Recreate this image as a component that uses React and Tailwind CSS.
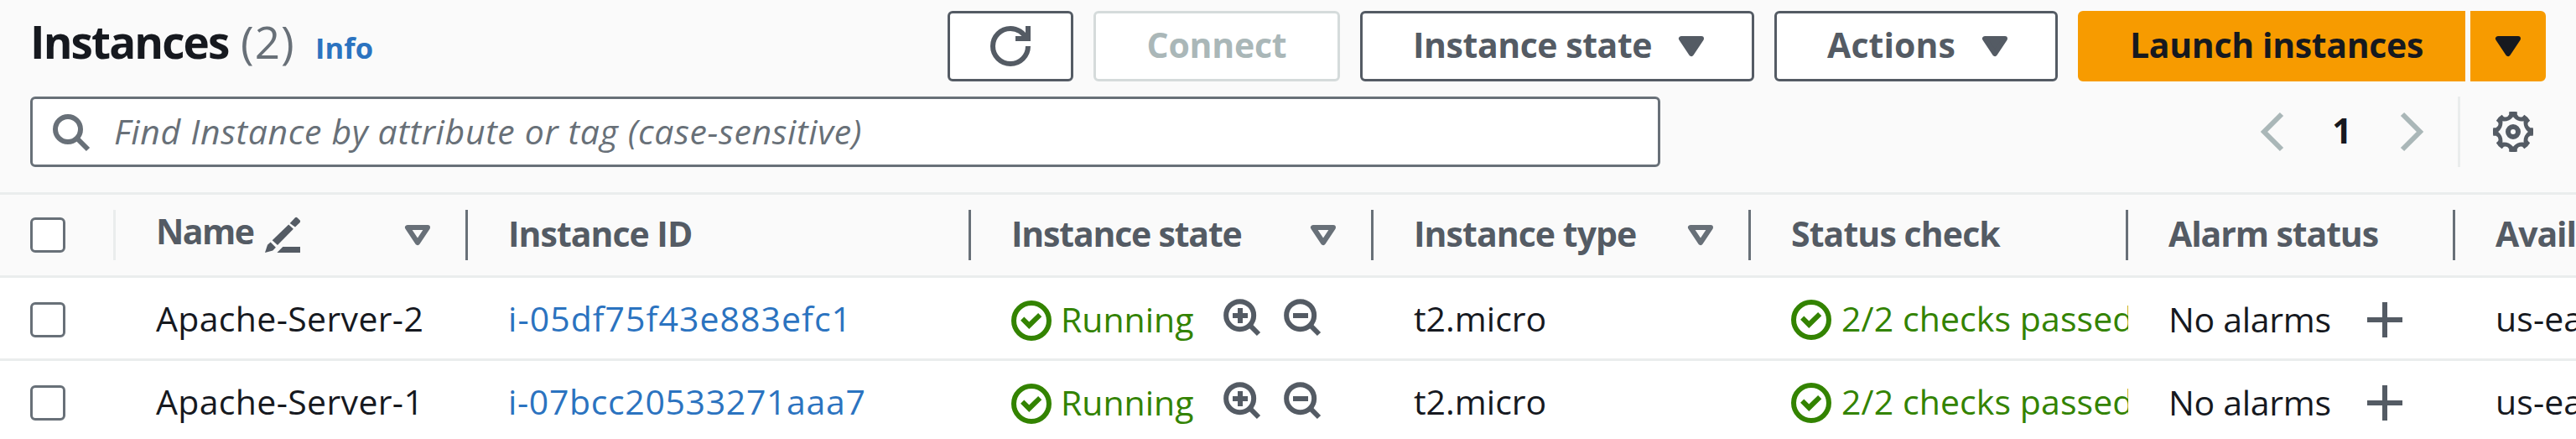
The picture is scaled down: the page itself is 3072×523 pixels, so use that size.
const COLUMNS =
  'grid grid-cols-[138px_420px_600px_480px_450px_450px_390px_480px] items-center';

function Icon({ children, className = '' }) {
  return (
    <svg
      viewBox="0 0 16 16"
      fill="none"
      stroke="currentColor"
      strokeWidth="2"
      className={`size-12 shrink-0 ${className}`}
    >
      {children}
    </svg>
  );
}

const Refresh = () => (
  <Icon className="text-[#545b64]">
    <path d="M15 8c0 3.87-3.13 7-7 7s-7-3.13-7-7 3.13-7 7-7c2.79 0 5.2 1.63 6.33 4" />
    <path d="M10 5h5V0" />
  </Icon>
);

const CaretFilled = () => (
  <Icon>
    <path d="M4 5h8l-4 6-4-6z" fill="currentColor" strokeLinejoin="round" />
  </Icon>
);

const Sort = () => (
  <Icon className="mr-[33px] ml-auto text-[#687078]">
    <path d="M4 5h8l-4 6-4-6z" strokeLinejoin="round" />
  </Icon>
);

const Search = () => (
  <Icon className="text-[#687078]">
    <circle cx="7" cy="7" r="5" />
    <path d="m15 15-4.5-4.5" />
  </Icon>
);

const Pencil = () => (
  <Icon className="text-[#545b64]">
    <g fill="currentColor" stroke="none">
      <path d="M13 1.1q.4-.4.8 0l1.1 1.1q.3.4 0 .8L13 4.8 10.9 3.3z" />
      <path d="M10.4 3.8l1.9 1.8L6 12l-2.1-1.9z" />
      <path d="M3.2 10.8l2.1 2.1-1.2 1.3L1 15l1-3.1z" />
      <path d="M5.8 15l2.3-2.3H15V15z" />
    </g>
  </Icon>
);

const Success = () => (
  <Icon>
    <circle cx="8" cy="8" r="7" />
    <path d="m4.4 7.2 2.7 2.7 4.3-4.2" />
  </Icon>
);

const Magnifier = ({ plus }) => (
  <Icon>
    <circle cx="7.55" cy="7.55" r="5.5" />
    <path d={plus ? 'M4.67 7.67h6M7.67 4.67v6' : 'M4.67 7.67h6'} />
    <path d="m11.4 11.4 3.6 3.6" />
  </Icon>
);

const Plus = () => (
  <Icon className="text-[#545b64]">
    <path d="M8 1v14M1 8h14" />
  </Icon>
);

function polar(x, r, k) {
  const a = (k * Math.PI) / 4;
  const px = 8 + x * Math.cos(a) + r * Math.sin(a);
  const py = 8 + x * Math.sin(a) - r * Math.cos(a);
  return `${px.toFixed(2)} ${py.toFixed(2)}`;
}

function gearPath() {
  let outer = '';
  let inner = `M${polar(0, 5.95, 0)}`;
  for (let k = 0; k < 8; k++) {
    outer += `${k ? 'Q' + polar(0, 5.9, k - 0.5) + ' ' : 'M'}${polar(-1.6, 6.8, k)}`;
    outer += `L${polar(-1.6, 7.9, k)}L${polar(0, 8.1, k)}L${polar(1.6, 7.9, k)}L${polar(1.6, 6.8, k)}`;
    inner += `Q${polar(0, 4.3, k + 0.5)} ${polar(0, 5.95, k + 1)}`;
  }
  return `${outer}Q${polar(0, 5.9, 7.5)} ${polar(-1.6, 6.8, 0)}Z${inner}Z`;
}

const Gear = () => (
  <Icon className="text-[#545b64]">
    <path d={gearPath()} fill="currentColor" fillRule="evenodd" stroke="none" />
    <circle cx="8" cy="8" r="2" />
  </Icon>
);

function Button({ children, className = 'bg-white' }) {
  return (
    <button
      className={`flex h-[84px] shrink-0 items-center rounded-[6px] border-[3px] font-bold ${className}`}
    >
      {children}
    </button>
  );
}

const Checkbox = () => (
  <span className="ml-9 block size-[42px] rounded-[6px] border-[3px] border-[#687078] bg-white" />
);

function HeaderCell({ label, sortable, className = '' }) {
  return (
    <div className="flex h-24 items-center pl-12">
      <span className={`pb-1 ${className}`}>{label}</span>
      {sortable && <Sort />}
      <span className={`h-[60px] w-[3px] bg-[#687078] ${sortable ? '' : 'ml-auto'}`} />
    </div>
  );
}

function Row({ name, id, idClass }) {
  return (
    <div className={`${COLUMNS} h-[99px] border-b-[3px] border-[#eaeded] bg-white pt-1 whitespace-nowrap`}>
      <Checkbox />
      <div className="pb-1 pl-12 tracking-[0.35px]">{name}</div>
      <div className={`pb-1 pl-12 text-[#2b73c0] ${idClass}`}>{id}</div>
      <div className="flex items-center pl-12">
        <div className="flex w-[250px] items-center gap-[11px] pt-[2px] text-[#338300]">
          <Success />
          <span className="pb-1">Running</span>
        </div>
        <div className="flex gap-6 pb-2 text-[#545b64]">
          <Magnifier plus />
          <Magnifier />
        </div>
      </div>
      <div className="pb-1 pl-12">t2.micro</div>
      <div className="flex items-center gap-3 overflow-hidden pl-12 text-[#338300]">
        <Success />
        <span className="pb-1 tracking-[0.1px]">2/2 checks passed</span>
      </div>
      <div className="flex items-center pl-12">
        <span className="w-[234px] pb-[2px] tracking-[-0.3px]">No alarms</span>
        <Plus />
      </div>
      <div className="pb-1 pl-12 tracking-[0.1px]">us-east-1a</div>
    </div>
  );
}

export default function App() {
  return (
    <div className="h-[523px] w-[3072px] overflow-hidden bg-[#fafafa] font-['Open_Sans',sans-serif] text-[41px] leading-[56px] text-[#16191f]">
      <div className="flex h-[97px] px-9 pt-[13px]">
        <div className="flex flex-1 items-baseline text-[53px] leading-[73px]">
          <h1 className="w-[251px] font-bold tracking-[-1.9px]">Instances</h1>
          <span className="w-[89px] tracking-[1px] text-[#687078]">(2)</span>
          <a className="text-[34.5px] font-bold tracking-[0.1px] text-[#2b73c0]">Info</a>
        </div>
        <div className="flex gap-6">
          <Button className="w-[150px] justify-center border-[#545b64] bg-white">
            <Refresh />
          </Button>
          <Button className="w-[294px] justify-center border-[#d5dbdb] bg-white text-[#aab7b8]">
            <span className="pb-1 tracking-[-0.25px]">Connect</span>
          </Button>
          <Button className="w-[470px] justify-between border-[#545b64] bg-white pr-12 pl-[60px] text-[#545b64]">
            <span className="pb-1 tracking-[-0.45px]">Instance state</span>
            <CaretFilled />
          </Button>
          <Button className="w-[338px] justify-between border-[#545b64] bg-white pr-12 pl-[60px] text-[#545b64]">
            <span className="pb-1 tracking-[0.1px]">Actions</span>
            <CaretFilled />
          </Button>
          <div className="flex gap-[6px]">
            <Button className="w-[462px] rounded-r-none border-[#f79b00] bg-[#f79b00] pl-[59px]">
              <span className="pb-1 tracking-[-0.35px]">Launch instances</span>
            </Button>
            <Button className="w-[90px] justify-center rounded-l-none border-[#f79b00] bg-[#f79b00]">
              <CaretFilled />
            </Button>
          </div>
        </div>
      </div>

      <div className="flex h-[132px] items-start justify-between pt-[18px] pr-[51px] pl-9">
        <div className="flex h-[84px] w-[1944px] items-center gap-7 rounded-[6px] border-[3px] border-[#687078] bg-white pl-[21px]">
          <Search />
          <span className="pb-[2px] tracking-[0.65px] text-[#687078] italic">
            Find Instance by attribute or tag (case-sensitive)
          </span>
        </div>
        <div className="flex h-[84px] items-center">
          <Icon className="text-[#aab7b8]">
            <path d="M11 1 4 8l7 7" />
          </Icon>
          <span className="w-[114px] pb-1 text-center font-bold">1</span>
          <Icon className="text-[#aab7b8]">
            <path d="m5 1 7 7-7 7" />
          </Icon>
          <span className="mr-[39px] ml-[33px] h-[84px] w-[3px] bg-[#eaeded]" />
          <Gear />
        </div>
      </div>

      <div className={`${COLUMNS} h-[102px] border-y-[3px] border-[#eaeded] font-bold whitespace-nowrap text-[#545b64]`}>
        <div className="flex items-center justify-between">
          <Checkbox />
          <span className="h-[60px] w-[3px] bg-[#eaeded]" />
        </div>
        <div className="flex h-24 items-center pl-12">
          <span className="w-[127px] pb-[10px] tracking-[-1.5px]">Name</span>
          <Pencil />
          <Sort />
          <span className="h-[60px] w-[3px] bg-[#687078]" />
        </div>
        <HeaderCell label="Instance ID" className="tracking-[-1px]" />
        <HeaderCell label="Instance state" sortable className="tracking-[-1.2px]" />
        <HeaderCell label="Instance type" sortable className="tracking-[-0.95px]" />
        <HeaderCell label="Status check" className="tracking-[-0.9px]" />
        <HeaderCell label="Alarm status" className="tracking-[-1.1px]" />
        <HeaderCell label="Availability Zone" className="tracking-[-1.1px]" />
      </div>

      <Row name="Apache-Server-2" id="i-05df75f43e883efc1" idClass="tracking-[1.05px]" />
      <Row name="Apache-Server-1" id="i-07bcc20533271aaa7" idClass="tracking-[0.65px]" />
    </div>
  );
}
